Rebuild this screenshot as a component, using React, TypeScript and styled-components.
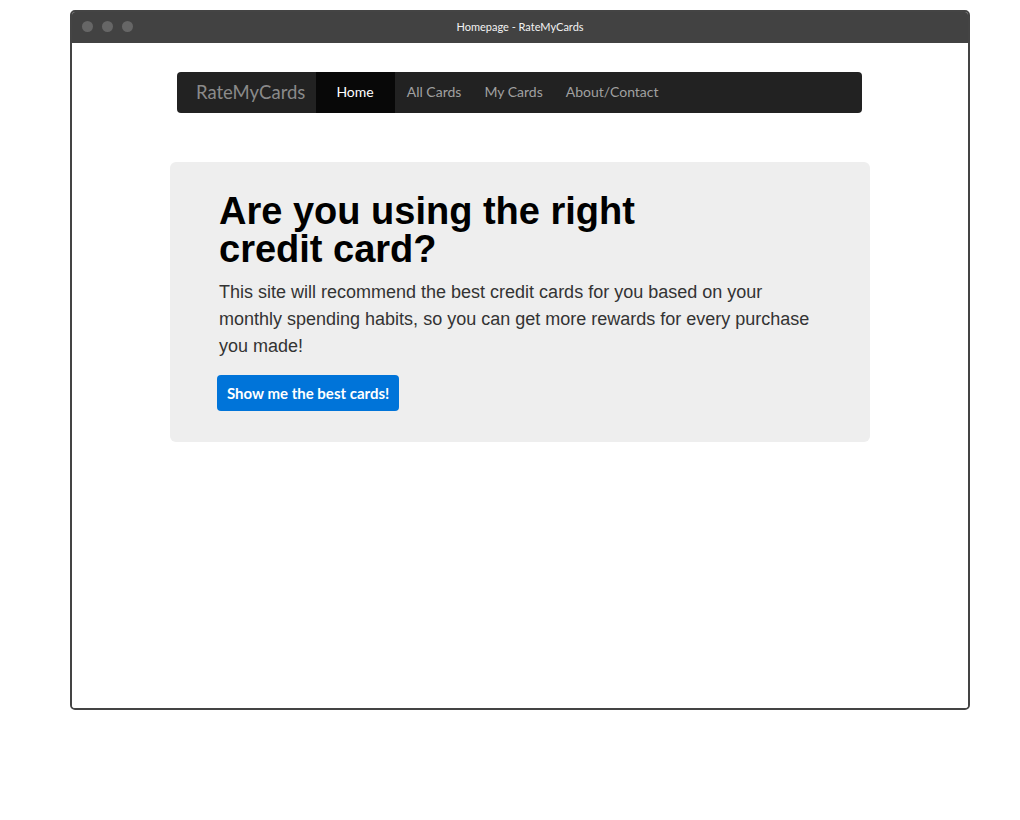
import React from "react";
import styled, { createGlobalStyle } from "styled-components";

const Global = createGlobalStyle`
  html, body { margin: 0; padding: 0; background: #fff; }
  body { font-family: "Lato", "Noto Sans", sans-serif; }
  * { box-sizing: border-box; }
`;

const Page = styled.div`
  width: 1020px;
  height: 820px;
  padding: 10px 50px 0 70px;
`;

const Window = styled.div`
  width: 900px;
  height: 700px;
  border: 2px solid #444;
  border-radius: 5px;
  overflow: hidden;
  display: flex;
  flex-direction: column;
`;

const TitleBar = styled.div`
  position: relative;
  height: 31px;
  background: #424242;
  display: flex;
  align-items: center;
  justify-content: center;
  flex-shrink: 0;
`;

const Dots = styled.div`
  position: absolute;
  left: 10px;
  top: 9px;
  display: flex;
  gap: 9px;
`;

const Dot = styled.span`
  width: 11px;
  height: 11px;
  border-radius: 50%;
  background: #666;
`;

const TitleText = styled.span`
  font-family: "Lato", sans-serif;
  font-size: 11px;
  color: #f2f2f2;
  padding-bottom: 2px;
`;

const Content = styled.div`
  flex: 1;
  background: #fff;
  padding: 29px 0 0 0;
  display: flex;
  flex-direction: column;
  align-items: center;
`;

const Nav = styled.nav`
  width: 685px;
  height: 41px;
  margin-right: 1px;
  background: #222;
  border-radius: 4px;
  display: flex;
  align-items: stretch;
`;

const Brand = styled.a`
  display: flex;
  align-items: center;
  padding: 0 11px 2px 19px;
  font-size: 18.5px;
  color: #8a8a8a;
`;

const NavItem = styled.a<{ $active?: boolean }>`
  display: flex;
  align-items: center;
  padding: ${(p) => (p.$active ? "0 21px 2px 20px" : "0 11px 2px 12px")};
  font-size: 14px;
  color: ${(p) => (p.$active ? "#fff" : "#a0a0a0")};
  background: ${(p) => (p.$active ? "#080808" : "transparent")};
`;

const Jumbo = styled.section`
  width: 700px;
  margin-top: 49px;
  background: #eee;
  border-radius: 6px;
  padding: 30px 49px 31px 49px;
`;

const Heading = styled.h1`
  margin: 0 0 11px 0;
  font-family: "Liberation Sans", Arial, sans-serif;
  font-weight: 700;
  font-size: 38px;
  line-height: 38px;
  color: #000;
  max-width: 440px;
`;

const Lead = styled.p`
  margin: 0 0 15px 0;
  font-family: "Liberation Sans", Arial, sans-serif;
  font-size: 18px;
  line-height: 27px;
  color: #333;
`;

const Button = styled.button`
  margin-left: -2px;
  height: 36px;
  padding: 0 10px;
  border: none;
  border-radius: 4px;
  background: #0074d9;
  color: #fff;
  font-family: "Lato", sans-serif;
  font-weight: 700;
  font-size: 15px;
  cursor: pointer;
`;

export default function App() {
  return (
    <>
      <Global />
      <Page>
        <Window>
          <TitleBar>
            <Dots>
              <Dot />
              <Dot />
              <Dot />
            </Dots>
            <TitleText>Homepage - RateMyCards</TitleText>
          </TitleBar>
          <Content>
            <Nav>
              <Brand>RateMyCards</Brand>
              <NavItem $active>Home</NavItem>
              <NavItem>All Cards</NavItem>
              <NavItem>My Cards</NavItem>
              <NavItem>About/Contact</NavItem>
            </Nav>
            <Jumbo>
              <Heading>Are you using the right credit card?</Heading>
              <Lead>
                This site will recommend the best credit cards for you based on your monthly
                spending habits, so you can get more rewards for every purchase you made!
              </Lead>
              <Button>Show me the best cards!</Button>
            </Jumbo>
          </Content>
        </Window>
      </Page>
    </>
  );
}
